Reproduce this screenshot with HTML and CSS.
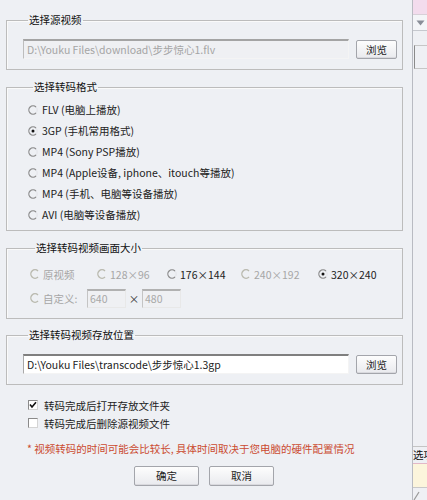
FILE: index.html
```html
<!DOCTYPE html>
<html>
<head>
<title>转码设置</title>
<link rel="stylesheet" href="styles.css">
</head>
<body>
<div class="screen">
	<div class="dialog">
		<fieldset class="group group_src">
			<legend>选择源视频</legend>
			<div class="path_row">
				<div class="path_edit disabled">D:\Youku Files\download\步步惊心1.flv</div>
				<button class="browse_btn" disabled>浏览</button>
			</div>
		</fieldset>

		<fieldset class="group group_fmt">
			<legend>选择转码格式</legend>
			<div class="opt"><span class="radio"></span>FLV (电脑上播放)</div>
			<div class="opt"><span class="radio checked"></span>3GP (手机常用格式)</div>
			<div class="opt"><span class="radio"></span>MP4 (Sony PSP播放)</div>
			<div class="opt"><span class="radio"></span>MP4 (Apple设备, iphone、itouch等播放)</div>
			<div class="opt"><span class="radio"></span>MP4 (手机、电脑等设备播放)</div>
			<div class="opt"><span class="radio"></span>AVI (电脑等设备播放)</div>
		</fieldset>

		<fieldset class="group group_size">
			<legend>选择转码视频画面大小</legend>
			<div class="size_grid">
				<div class="opt gray"><span class="radio dis"></span>原视频</div>
				<div class="opt gray"><span class="radio dis"></span>128×96</div>
				<div class="opt"><span class="radio"></span>176×144</div>
				<div class="opt gray"><span class="radio dis"></span>240×192</div>
				<div class="opt"><span class="radio checked"></span>320×240</div>
			</div>
			<div class="custom_row">
				<div class="opt gray custom_label"><span class="radio dis"></span>自定义:</div>
				<div class="num_edit">640</div>
				<span class="times">×</span>
				<div class="num_edit">480</div>
			</div>
		</fieldset>

		<fieldset class="group group_dst">
			<legend>选择转码视频存放位置</legend>
			<div class="path_row">
				<div class="path_edit">D:\Youku Files\transcode\步步惊心1.3gp</div>
				<button class="browse_btn">浏览</button>
			</div>
		</fieldset>

		<div class="checks">
			<div class="chk_row"><span class="chk checked"></span>转码完成后打开存放文件夹</div>
			<div class="chk_row"><span class="chk"></span>转码完成后删除源视频文件</div>
		</div>

		<div class="note">* 视频转码的时间可能会比较长, 具体时间取决于您电脑的硬件配置情况</div>

		<div class="btn_row">
			<button class="push_btn">确定</button>
			<button class="push_btn">取消</button>
		</div>
	</div>

	<div class="side">
		<div class="side_tab"></div>
		<div class="side_combo">
			<svg width="9" height="6" viewBox="0 0 9 6"><path d="M0.5 0.5 L8.5 0.5 L4.5 5.5 Z" fill="#8a8e98"/></svg>
		</div>
		<div class="side_gap"></div>
		<div class="side_box"></div>
		<div class="side_fill"></div>
		<div class="side_label">选项</div>
		<div class="side_yellow"></div>
		<div class="side_foot">
			<svg width="13" height="10" viewBox="0 0 13 10"><path d="M1 10 L6 2" stroke="#9a9a9a" stroke-width="1.2"/></svg>
		</div>
	</div>
</div>
</body>
</html>
```

FILE: styles.css
```css
body
{
	margin : 0;
	font-family : "Noto Sans CJK SC", "Liberation Sans", sans-serif;
	font-size : 10.5px;
	color : #222;
	background-color : #eef0f4;
}
.screen
{
	display : flex;
	width : 427px;
	height : 500px;
	overflow : hidden;
}
.dialog
{
	width : 413px;
	box-sizing : border-box;
	padding : 13px 0 0 6px;
	background-color : #eef0f4;
	border-right : 1px solid #b9bbc2;
}

/* group boxes */
.group
{
	width : 397px;
	box-sizing : border-box;
	margin : 0 0 0 0;
	padding : 0;
	border : 1px solid #bcbcbc;
	box-shadow : inset 1px 1px 0 #fafafa;
}
.group legend
{
	margin-left : 5px;
	padding : 0 1px;
	line-height : 14px;
	font-size : 10.5px;
	color : #111;
}
.group_fmt, .group_size
{
	margin-top : 10px;
}
.group_dst
{
	margin-top : 9px;
}
.group_src, .group_dst
{
	padding : 12px 5px 10px 16px;
}
.group_fmt
{
	padding : 5px 0 5px 21px;
}
.group_size
{
	padding : 9px 0 10px 23px;
}

/* path edits */
.path_row
{
	display : flex;
	align-items : center;
	gap : 7px;
}
.path_edit
{
	flex : 0 0 326px;
	height : 20px;
	box-sizing : border-box;
	padding : 0 3px;
	line-height : 18px;
	white-space : nowrap;
	overflow : hidden;
	background-color : #fff;
	border-top : 2px solid #7f7f7f;
	border-left : 1px solid #a9a9a9;
	border-right : 1px solid #f4f4f4;
	border-bottom : 1px solid #f4f4f4;
}
.path_edit.disabled
{
	background-color : #eff0f3;
	color : #a5a5a5;
	border-top-color : #a4a4a4;
	border-left-color : #bdbdbd;
}
.browse_btn, .push_btn
{
	font-family : "Noto Sans CJK SC", sans-serif;
	font-size : 10.5px;
	color : #222;
	padding : 0;
	border : 1px solid #a3a5ab;
	border-radius : 2px;
	background : linear-gradient(#fdfdfd, #e9eaee);
	box-shadow : inset 0 -1px 0 #d9d9de;
}
.browse_btn
{
	width : 41px;
	height : 19px;
	line-height : 17px;
}

/* radios */
.opt
{
	display : flex;
	align-items : center;
	height : 21px;
	white-space : nowrap;
}
.opt.gray
{
	color : #a6a6a6;
}
.radio
{
	width : 10px;
	height : 10px;
	margin-right : 4px;
	flex : none;
	background : url("data:image/svg+xml;utf8,<svg xmlns='http://www.w3.org/2000/svg' width='10' height='10'><circle cx='5' cy='5' r='4.2' fill='none' stroke='%23e2e3e8' stroke-width='1'/><path d='M8 2 A4.2 4.2 0 1 0 8 8' fill='none' stroke='%238c8c8c' stroke-width='1.2'/></svg>") no-repeat;
}
.radio.dis
{
	background : url("data:image/svg+xml;utf8,<svg xmlns='http://www.w3.org/2000/svg' width='10' height='10'><path d='M8 2 A4.2 4.2 0 1 0 8 8' fill='none' stroke='%23b9b9ae' stroke-width='1.4'/></svg>") no-repeat;
}
.radio.checked
{
	background : url("data:image/svg+xml;utf8,<svg xmlns='http://www.w3.org/2000/svg' width='10' height='10'><circle cx='5' cy='5' r='4.2' fill='none' stroke='%23e2e3e8' stroke-width='1'/><path d='M8 2 A4.2 4.2 0 1 0 8 8' fill='none' stroke='%238c8c8c' stroke-width='1.2'/><circle cx='5' cy='5' r='1.5' fill='%23111'/></svg>") no-repeat;
}

/* size grid */
.size_grid
{
	display : grid;
	grid-template-columns : 67px 70px 74px 77px auto;
	height : 20px;
}
.size_grid .opt, .custom_row .opt
{
	height : 20px;
}
.size_grid .radio, .custom_row .radio
{
	margin-right : 3px;
}
.custom_row
{
	display : flex;
	align-items : center;
	margin-top : 4px;
	height : 20px;
}
.custom_label
{
	width : 57px;
}
.num_edit
{
	width : 39px;
	height : 19px;
	box-sizing : border-box;
	padding : 0 2px;
	line-height : 16px;
	color : #a8a8a8;
	background-color : #eff0f3;
	border-top : 2px solid #b1b1b1;
	border-left : 1px solid #c4c4c4;
	border-right : 1px solid #e8e8e8;
	border-bottom : 1px solid #e8e8e8;
}
.times
{
	width : 16px;
	text-align : center;
	color : #333;
}

/* checkboxes */
.checks
{
	padding : 11px 0 0 22px;
}
.chk_row
{
	display : flex;
	align-items : center;
	height : 18px;
}
.chk
{
	width : 10px;
	height : 10px;
	margin-right : 6px;
	flex : none;
	box-sizing : border-box;
	background-color : #fff;
	border-top : 1px solid #8a8a8a;
	border-left : 1px solid #8a8a8a;
	border-right : 1px solid #d4d4d4;
	border-bottom : 1px solid #d4d4d4;
}
.chk.checked
{
	background : #fff url("data:image/svg+xml;utf8,<svg xmlns='http://www.w3.org/2000/svg' width='8' height='8'><path d='M1 3.5 L3 6 L7 1.2' fill='none' stroke='%23111' stroke-width='1.6'/></svg>") no-repeat;
}
.note
{
	padding : 9px 0 0 21px;
	color : #cb4b30;
	line-height : 16px;
	white-space : nowrap;
}
.btn_row
{
	display : flex;
	gap : 10px;
	padding : 9px 0 0 128px;
}
.push_btn
{
	width : 65px;
	height : 20px;
	line-height : 18px;
}

/* neighbouring window strip */
.side
{
	flex : 1;
	display : flex;
	flex-direction : column;
	background-color : #eff0f4;
	overflow : hidden;
}
.side_tab
{
	height : 14px;
	background-color : #f3dced;
	border-bottom : 1px solid #d8d0d8;
}
.side_combo
{
	height : 15px;
	padding-left : 3px;
	display : flex;
	align-items : center;
	background-color : #f4f5f8;
	border-bottom : 1px solid #c6c8ce;
}
.side_gap
{
	height : 14px;
}
.side_box
{
	height : 22px;
	margin-left : 1px;
	border-left : 1px solid #8a8a8a;
	border-top : 1px solid #c6c6c6;
	border-bottom : 1px solid #c6c6c6;
}
.side_fill
{
	flex : 1;
}
.side_label
{
	height : 16px;
	line-height : 16px;
	white-space : nowrap;
	color : #111;
	border-top : 1px solid #c4c4c4;
	border-bottom : 1px solid #e3b8c8;
}
.side_yellow
{
	height : 23px;
	background-color : #fcf5dc;
	border-bottom : 1px solid #c9c9c9;
}
.side_foot
{
	height : 12px;
}
```
